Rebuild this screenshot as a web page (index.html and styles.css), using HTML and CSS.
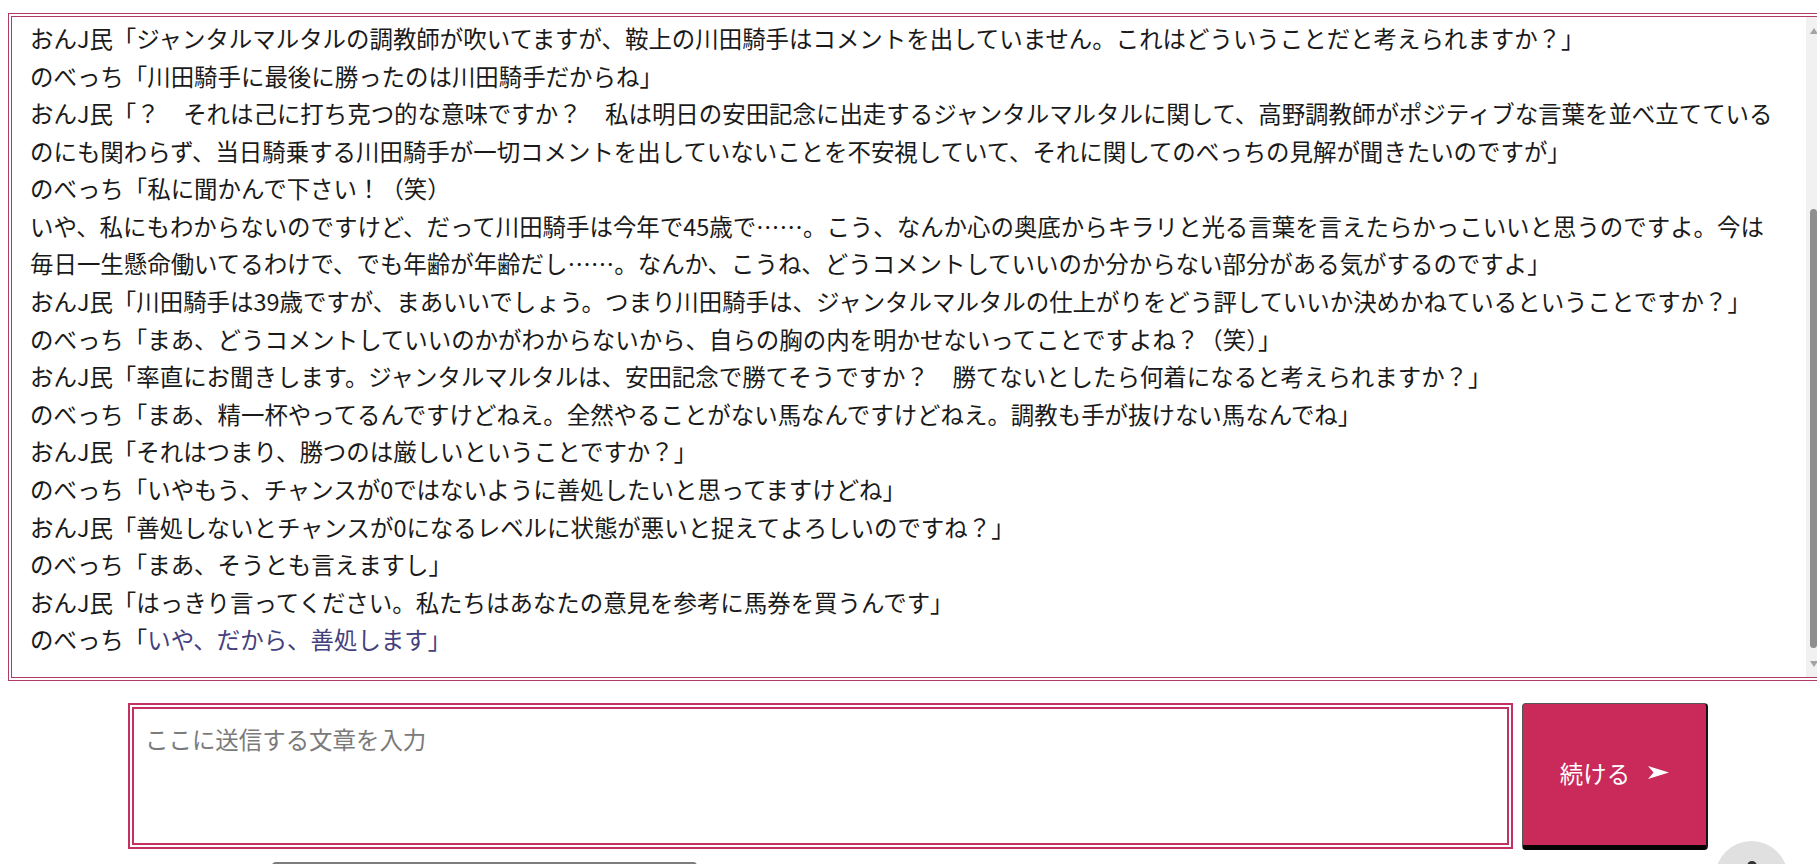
FILE: index.html
```html
<!DOCTYPE html>
<html lang="ja">
<head>
<meta charset="utf-8">
<title>チャット</title>
<link rel="stylesheet" href="styles.css">
</head>
<body>
<main class="page">
  <div class="log-wrap">
    <section class="log">
      <div class="log-inner">
        <p class="msg">おんJ民「ジャンタルマルタルの調教師が吹いてますが、鞍上の川田騎手はコメントを出していません。これはどういうことだと考えられますか？」</p>
        <p class="msg">のべっち「川田騎手に最後に勝ったのは川田騎手だからね」</p>
        <p class="msg">おんJ民「？　それは己に打ち克つ的な意味ですか？　私は明日の安田記念に出走するジャンタルマルタルに関して、高野調教師がポジティブな言葉を並べ立てているのにも関わらず、当日騎乗する川田騎手が一切コメントを出していないことを不安視していて、それに関してのべっちの見解が聞きたいのですが」</p>
        <p class="msg">のべっち「私に聞かんで下さい！（笑）<br>いや、私にもわからないのですけど、だって川田騎手は今年で45歳で……。こう、なんか心の奥底からキラリと光る言葉を言えたらかっこいいと思うのですよ。今は毎日一生懸命働いてるわけで、でも年齢が年齢だし……。なんか、こうね、どうコメントしていいのか分からない部分がある気がするのですよ」</p>
        <p class="msg">おんJ民「川田騎手は39歳ですが、まあいいでしょう。つまり川田騎手は、ジャンタルマルタルの仕上がりをどう評していいか決めかねているということですか？」</p>
        <p class="msg">のべっち「まあ、どうコメントしていいのかがわからないから、自らの胸の内を明かせないってことですよね？（笑）」</p>
        <p class="msg">おんJ民「率直にお聞きします。ジャンタルマルタルは、安田記念で勝てそうですか？　勝てないとしたら何着になると考えられますか？」</p>
        <p class="msg">のべっち「まあ、精一杯やってるんですけどねえ。全然やることがない馬なんですけどねえ。調教も手が抜けない馬なんでね」</p>
        <p class="msg">おんJ民「それはつまり、勝つのは厳しいということですか？」</p>
        <p class="msg">のべっち「いやもう、チャンスが0ではないように善処したいと思ってますけどね」</p>
        <p class="msg">おんJ民「善処しないとチャンスが0になるレベルに状態が悪いと捉えてよろしいのですね？」</p>
        <p class="msg">のべっち「まあ、そうとも言えますし」</p>
        <p class="msg">おんJ民「はっきり言ってください。私たちはあなたの意見を参考に馬券を買うんです」</p>
        <p class="msg">のべっち「<span class="streaming">いや、だから、善処します」</span></p>
      </div>
    </section>
    <div class="scrollbar" aria-hidden="true">
      <span class="sb-arrow sb-up"></span>
      <span class="sb-thumb"></span>
      <span class="sb-arrow sb-down"></span>
    </div>
  </div>

  <form class="composer">
    <textarea class="input" placeholder="ここに送信する文章を入力"></textarea>
    <button class="send" type="button">
      <span class="send-label">続ける</span>
      <svg class="send-icon" width="21" height="13" viewBox="0 0 21 13" aria-hidden="true">
        <polygon points="0,0 21,6.5 0,13 5.5,6.5" fill="#ffffff"/>
      </svg>
    </button>
  </form>

  <div class="options"></div>

  <button class="fab" type="button" aria-label="メニュー"><span class="fab-icon"></span></button>
</main>
</body>
</html>
```

FILE: styles.css
```css
html, body {
  overflow: hidden;
}

body {
  margin: 8px 0 0 8px;
  background: #ffffff;
  color: #1a1a1a;
  font-family: "Noto Sans CJK JP", "Noto Sans", sans-serif;
  font-size: 23.45px;
}

.page {
  display: flex;
  flex-direction: column;
  align-items: flex-start;
}

/* the log runs past the right edge of the window; the wrap clips it there */
.log-wrap {
  position: relative;
  margin-top: 5px;
  width: 100%;
  height: 668px;
  overflow: hidden;
}

.log {
  width: 1817px;
  height: 668px;
  box-sizing: border-box;
  border: 4px double #b03a68;
  padding: 0 39px 0 18px;
  overflow-y: auto;
  overflow-x: hidden;
  display: flex;
  flex-direction: column-reverse;
  scrollbar-width: none;
}

.log-inner {
  flex-shrink: 0;
  padding-bottom: 18px;
}

.msg {
  margin: 0;
  line-height: 37.6px;
}

.streaming {
  color: #443f7d;
}

/* scrollbar drawn over the right edge of the log */
.scrollbar {
  position: absolute;
  top: 4px;
  bottom: 4px;
  left: 1798px;
  width: 15px;
  background: #f1f1f1;
  display: flex;
  flex-direction: column;
  align-items: center;
}

.sb-arrow {
  width: 0;
  height: 0;
  border-left: 4.5px solid transparent;
  border-right: 4.5px solid transparent;
}

.sb-up {
  margin-top: 11px;
  border-bottom: 6px solid #a3a3a3;
}

.sb-thumb {
  margin-top: 175px;
  width: 7px;
  height: 439px;
  border-radius: 4px;
  background: #8e8e8e;
}

.sb-down {
  margin-top: 13px;
  border-top: 6px solid #a3a3a3;
}

.composer {
  display: flex;
  gap: 9px;
  margin: 22px 0 0 120px;
}

.input {
  width: 1385px;
  height: 146px;
  box-sizing: border-box;
  border: 6px double #c2315f;
  padding: 12px 11px;
  margin: 0;
  font-family: "Noto Sans CJK JP", "Noto Sans", sans-serif;
  font-size: 23.45px;
  line-height: 37.6px;
  color: #1a1a1a;
  resize: none;
  outline: none;
  background: #ffffff;
}

.input::placeholder {
  color: #7a7a7a;
}

.send {
  width: 186px;
  height: 147px;
  box-sizing: border-box;
  margin: 0;
  padding: 0 0 4px;
  display: flex;
  align-items: center;
  justify-content: center;
  gap: 18px;
  background: #c92a59;
  color: #ffffff;
  border: 1px solid #555555;
  border-right: 2px solid #151515;
  border-bottom: 5px solid #050505;
  border-radius: 4px;
  font-family: "Noto Sans CJK JP", "Noto Sans", sans-serif;
  font-size: 23.45px;
  cursor: pointer;
}

.send-icon {
  display: block;
}

.options {
  margin: 12px 0 0 264px;
  width: 425px;
  height: 44px;
  box-sizing: border-box;
  border: 2px solid #7c7c7c;
  border-radius: 4px;
}

.fab {
  position: fixed;
  right: 29px;
  bottom: -50px;
  width: 73px;
  height: 73px;
  border: none;
  border-radius: 50%;
  background: #e0e0e0;
  padding: 20px 0 0;
  display: flex;
  justify-content: center;
  align-items: flex-start;
}

.fab-icon {
  display: block;
  width: 10px;
  height: 10px;
  border-radius: 50%;
  background: #333333;
}
```
